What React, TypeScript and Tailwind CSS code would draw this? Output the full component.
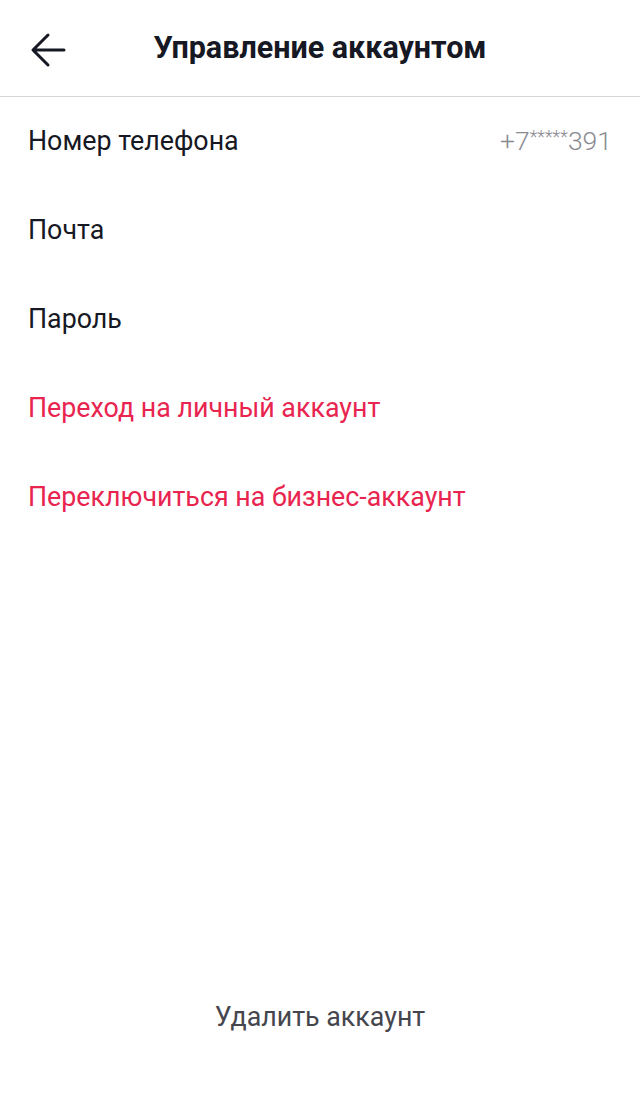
export default function App() {
  const rows = [
    { label: "Номер телефона", phone: true, danger: false },
    { label: "Почта", danger: false },
    { label: "Пароль", danger: false },
    { label: "Переход на личный аккаунт", danger: true },
    { label: "Переключиться на бизнес-аккаунт", danger: true },
  ]

  return (
    <div
      className="flex min-h-[1100px] w-full flex-col bg-white"
      style={{ fontFamily: "Roboto, 'Noto Sans', sans-serif" }}
    >
      {/* Header */}
      <div className="relative flex h-[97px] items-center justify-center border-b border-[#d6d6d8]">
        <button className="absolute left-[28px] top-[30px] flex h-[40px] w-[40px] items-center justify-center">
          <svg width="36" height="36" viewBox="0 0 36 36" fill="none">
            <path
              d="M34 18H4M18 3L3 18l15 15"
              stroke="#161823"
              strokeWidth="3"
              strokeLinecap="round"
              strokeLinejoin="round"
            />
          </svg>
        </button>
        <h1 className="text-[30.5px] font-bold text-[#161823]">Управление аккаунтом</h1>
      </div>

      {/* Settings list */}
      <div className="flex flex-col">
        {rows.map((row) => (
          <div key={row.label} className="flex h-[89px] items-center justify-between pl-[28px] pr-[28px]">
            <span className={`text-[26.8px] ${row.danger ? "text-[#e8244f]" : "text-[#161823]"}`}>
              {row.label}
            </span>
            {row.phone && (
              <span className="flex items-start text-[26.5px] font-light leading-none text-[#8a8b91]">
                +7<span className="text-[18px] leading-none">*****</span>391
              </span>
            )}
          </div>
        ))}
      </div>

      {/* Delete */}
      <div className="mt-auto mb-[38px] flex h-[89px] items-center justify-center">
        <span className="text-[26.8px] text-[#45464d]">Удалить аккаунт</span>
      </div>
    </div>
  )
}
